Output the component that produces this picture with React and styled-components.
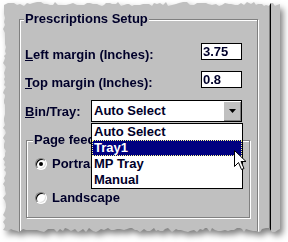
import React from 'react';
import styled, { createGlobalStyle, css } from 'styled-components';

const Global = createGlobalStyle`
  html, body { margin: 0; padding: 0; background: #fff; }
  body {
    width: 288px; height: 242px; overflow: hidden;
    font-family: "Liberation Sans", Arial, sans-serif;
  }
`;

function tornEdge() {
  let s = 11;
  const rnd = () => { s = (s * 9301 + 49297) % 233280; return s / 233280; };
  const pts = [];
  for (let x = 4; x < 278; x += 2 + Math.round(rnd() * 2)) pts.push([x, 2 + Math.round(rnd() * 4)]);
  pts.push([280, 4]);
  pts.push([280, 229]);
  for (let x = 278; x > 4; x -= 2 + Math.round(rnd() * 2)) pts.push([x, 228 + Math.round(rnd() * 4)]);
  for (let y = 230; y > 4; y -= 2 + Math.round(rnd() * 2)) pts.push([3 + Math.round(rnd() * 3), y]);
  return `polygon(${pts.map(([x, y]) => `${x}px ${y}px`).join(', ')})`;
}
const TORN = tornEdge();

const Screen = styled.div`
  width: 288px;
  height: 242px;
  background: #fff;
  color: #00002a;
  font: bold 13px/16px "Liberation Sans", Arial, sans-serif;
`;

const Shadowed = styled.div`
  width: 280px;
  filter: drop-shadow(3px 4px 3px rgba(0, 0, 0, 0.5));
`;

const Panel = styled.div`
  position: relative;
  width: 280px;
  height: 233px;
  background: #c0c0c0;
  clip-path: ${TORN};
  display: flex;
`;

const Page = styled.div`
  flex: none;
  width: 271px;
  height: 100%;
  box-sizing: border-box;
  border-right: 1px solid #000;
  box-shadow: inset -1px 0 0 #808080;
  padding: 11px 0 0 19px;
  overflow: hidden;
`;

const Group = styled.fieldset`
  margin: ${p => p.$top || 0}px 0 0 ${p => p.$left || 0}px;
  padding: 0;
  min-inline-size: 0;
  box-sizing: border-box;
  width: ${p => p.$width}px;
  ${p => p.$height && css`height: ${p.$height}px;`}
  border: 1px solid #808080;
  box-shadow: 1px 1px 0 #fff, inset 1px 1px 0 #fff;
`;

const Legend = styled.legend`
  margin-left: ${p => p.$offset}px;
  padding: 0 1px;
  background: #c0c0c0;
  white-space: nowrap;
`;

const GroupBody = styled.div`
  display: flex;
  flex-direction: column;
  padding: ${p => p.$pad};
`;

const Row = styled.div`
  display: flex;
  justify-content: space-between;
  align-items: flex-start;
  margin-top: ${p => p.$gap}px;
`;

const Label = styled.label`
  margin-top: 4px;
  margin-bottom: -4px;
  white-space: nowrap;
  u { text-decoration: underline; text-underline-offset: 1px; }
`;

const TextBox = styled.div`
  box-sizing: border-box;
  width: 41px;
  height: 17px;
  background: #fff;
  border: 1px solid #000;
  padding: 0 1px;
  line-height: 15px;
`;

const Combo = styled.div`
  position: relative;
  box-sizing: border-box;
  width: 151px;
  height: 22px;
  background: #fff;
  border: 1px solid #000;
  display: flex;
`;

const ComboText = styled.span`
  flex: 1;
  padding-left: 2px;
  line-height: 20px;
`;

const DropButton = styled.span`
  width: 18px;
  height: 20px;
  box-sizing: border-box;
  background: #c0c0c0;
  box-shadow: inset 1px 1px 0 #fff, inset -1px -1px 0 #808080;
  display: flex;
  align-items: center;
  justify-content: center;
`;

const List = styled.ul`
  position: absolute;
  left: -1px;
  top: calc(100% + 2px);
  z-index: 2;
  box-sizing: border-box;
  width: 152px;
  margin: 0;
  padding: 0;
  list-style: none;
  background: #fff;
  border: 1px solid #000;
`;

const Item = styled.li`
  height: 16px;
  line-height: 16px;
  padding-left: 2px;
  white-space: nowrap;
  ${p => p.$active && css`
    background: #000080;
    color: #fff;
    outline: 1px dotted #ffff90;
    outline-offset: -1px;
  `}
`;

const RadioRow = styled.div`
  display: flex;
  align-items: center;
  gap: 5px;
  height: 16px;
  margin-top: ${p => p.$gap}px;
  white-space: nowrap;
`;

const RadioCircle = styled.span`
  flex: none;
  width: 12px;
  height: 12px;
  box-sizing: border-box;
  border-radius: 50%;
  background: #fff;
  border: 1px solid;
  border-color: #808080 #fff #fff #808080;
  box-shadow: inset 1px 1px 0 #000, inset -1px -1px 0 #dfdfdf;
  display: flex;
  align-items: center;
  justify-content: center;
  &::after {
    content: '';
    display: ${p => (p.$checked ? 'block' : 'none')};
    width: 4px;
    height: 4px;
    border-radius: 50%;
    background: #000;
  }
`;

const Cursor = styled.svg`
  position: absolute;
  left: 234px;
  top: 150px;
  z-index: 5;
`;

const items = ['Auto Select', 'Tray1', 'MP Tray', 'Manual'];

export default function App() {
  return (
    <Screen>
      <Global />
      <Shadowed>
        <Panel>
          <Page>
            <Group $width={239} $height={260}>
              <Legend $offset={4}>Prescriptions Setup</Legend>
              <GroupBody $pad="0 15px 0 5px">
                <Row $gap={16}>
                  <Label><u>L</u>eft margin (Inches):</Label>
                  <TextBox>3.75</TextBox>
                </Row>
                <Row $gap={11}>
                  <Label><u>T</u>op margin (Inches):</Label>
                  <TextBox>0.8</TextBox>
                </Row>
                <Row $gap={12}>
                  <Label><u>B</u>in/Tray:</Label>
                  <Combo>
                    <ComboText>Auto Select</ComboText>
                    <DropButton>
                      <svg width="7" height="4" viewBox="0 0 7 4"><polygon points="0,0 7,0 3.5,4" fill="#000" /></svg>
                    </DropButton>
                    <List>
                      {items.map(t => (
                        <Item key={t} $active={t === 'Tray1'}>{t}</Item>
                      ))}
                    </List>
                  </Combo>
                </Row>
                <Group $width={224} $left={1} $top={10}>
                  <Legend $offset={6}>Page feed</Legend>
                  <GroupBody $pad="0 0 11px 8px">
                    <RadioRow $gap={8}>
                      <RadioCircle $checked />
                      <span>Portrait</span>
                    </RadioRow>
                    <RadioRow $gap={18}>
                      <RadioCircle />
                      <span>Landscape</span>
                    </RadioRow>
                  </GroupBody>
                </Group>
              </GroupBody>
            </Group>
          </Page>
          <Cursor width="13" height="21" viewBox="0 0 13 21">
            <path d="M0.5 0.5 L0.5 16.5 L4.5 12.5 L7.5 19.5 L10 18.5 L7 11.5 L12 11.5 Z" fill="#fff" stroke="#000" strokeWidth="1" strokeLinejoin="miter" />
          </Cursor>
        </Panel>
      </Shadowed>
    </Screen>
  );
}
